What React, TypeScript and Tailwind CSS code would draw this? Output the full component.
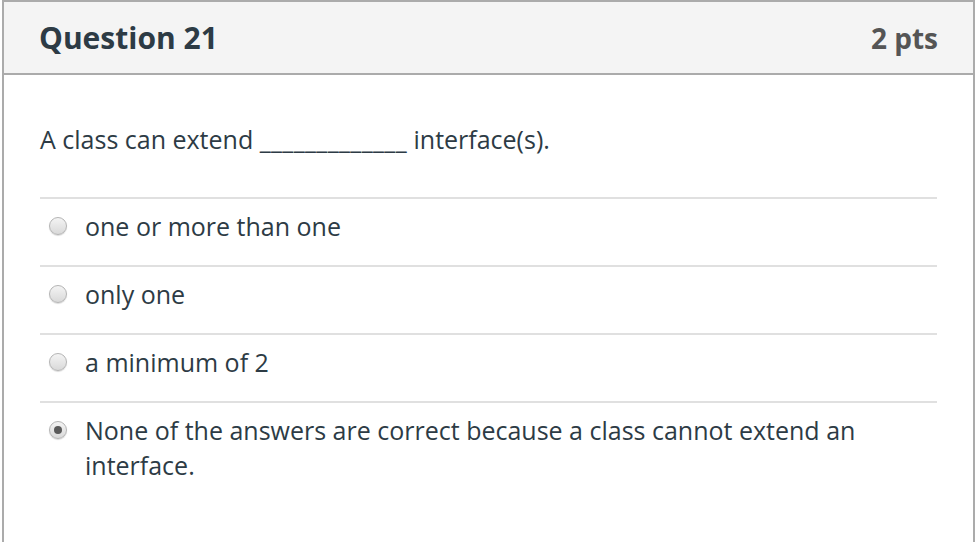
import React from "react";

const options = [
  { label: "one or more than one", checked: false },
  { label: "only one", checked: false },
  { label: "a minimum of 2", checked: false },
  { label: "None of the answers are correct because a class cannot extend an interface.", checked: true },
];

function Radio({ checked }: { checked: boolean }) {
  return (
    <span className="mt-[8px] flex h-[18px] w-[18px] shrink-0 items-center justify-center rounded-full border border-[#b4b4b4] bg-gradient-to-b from-[#f4f4f4] to-[#d9d9d9] shadow-[0_1px_1px_rgba(0,0,0,0.15)]">
      {checked && <span className="h-[8px] w-[8px] rounded-full bg-[#5a5a5a]" />}
    </span>
  );
}

export default function App() {
  return (
    <div className="min-h-screen bg-white" style={{ fontFamily: '"Open Sans", "Liberation Sans", sans-serif' }}>
      <div className="ml-[2px] h-[542px] w-[973px] border-x-2 border-t-2 border-[#ababab]">
        <div className="flex h-[73px] items-center justify-between border-b-2 border-[#ababab] bg-[#f4f4f4] pl-[35px] pr-[35px]">
          <h2 className="text-[30px] font-bold text-[#2d3b45]">Question 21</h2>
          <span className="text-[28px] font-bold text-[#555555]">2 pts</span>
        </div>
        <div className="px-[36px] pt-[47px] text-[25px] text-[#2d3b45]">
          <p className="mb-[40px] leading-[35px]">
            A class can extend <span className="tracking-[0.38px]">_____________</span> interface(s).
          </p>
          {options.map((o) => (
            <div key={o.label} className="flex gap-[18px] border-t-2 border-[#e0e0e0] pl-[9px] pr-[40px] pt-[10px] pb-[21px] leading-[35px]">
              <Radio checked={o.checked} />
              <span>{o.label}</span>
            </div>
          ))}
        </div>
      </div>
    </div>
  );
}
